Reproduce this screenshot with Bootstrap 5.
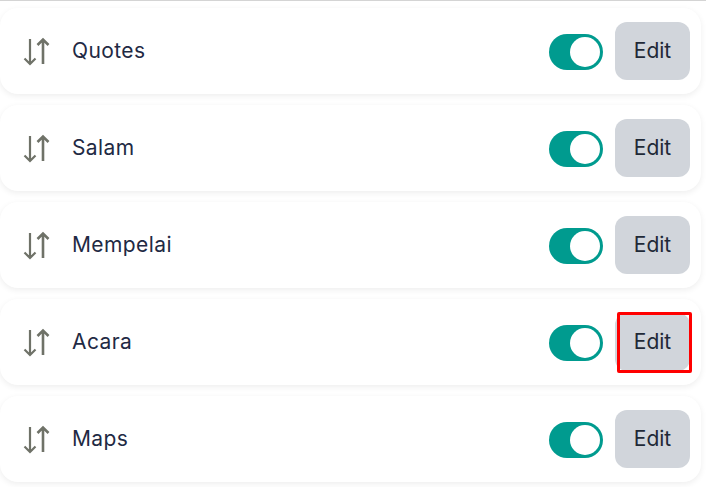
<!DOCTYPE html>
<html lang="id">
<head>
<meta charset="utf-8">
<title>Sections</title>
<link href="https://cdn.jsdelivr.net/npm/bootstrap@5.3.0/dist/css/bootstrap.min.css" rel="stylesheet">
<style>
html, body { height: 487px; overflow: hidden; }
body { background: #fff; font-family: Inter, sans-serif; border-top: 1px solid #d4d4d4; }
.sec-list { padding: 7px 5px 0 0; gap: 11px; }
.sec-row { height: 86px; background: #fff; border-radius: 18px; padding: 0 11px 0 22px; box-shadow: 0 2px 6px rgba(0,0,0,.07); }
.sec-drag { width: 28px; height: 30px; color: #6f7268; flex: none; }
.sec-name { margin: 0 0 1px 22px; font-size: 21px; letter-spacing: .4px; color: #1f2a44; line-height: 1; }
.sec-toggle { width: 54px; height: 36px; margin-top: 2px; border-radius: 18px; background: #009b8f; flex: none; padding: 3px; }
.sec-knob { width: 30px; height: 30px; border-radius: 50%; background: #fff; margin-left: auto; }
.sec-edit { width: 75px; height: 58px; margin-left: 12px; padding: 0; border: 0; border-radius: 12px; background: #d1d5db; color: #1f2937; font-size: 21px; }
.sec-edit:hover { background: #d1d5db; color: #1f2937; }
.sec-mark { border: 3px solid #f00; border-radius: 2px; position: absolute; top: -1px; right: -2px; bottom: -2px; left: 2px; pointer-events: none; }
</style>
</head>
<body>
<div class="d-flex flex-column sec-list">
  <div class="d-flex align-items-center sec-row">
    <svg class="sec-drag" viewBox="0 0 28 30" fill="none" stroke="currentColor" stroke-width="2.2"><path d="M8 3v25M2.5 22.5l5.500 5.500 5.500-5.500"/><path d="M21 28V3.500M15.500 9l5.500-5.500 5.500 5.500" stroke-width="2.600"/></svg>
    <span class="sec-name">Quotes</span>
    <div class="sec-toggle ms-auto"><div class="sec-knob"></div></div>
    <button type="button" class="btn sec-edit">Edit</button>
  </div>
  <div class="d-flex align-items-center sec-row">
    <svg class="sec-drag" viewBox="0 0 28 30" fill="none" stroke="currentColor" stroke-width="2.2"><path d="M8 3v25M2.5 22.5l5.500 5.500 5.500-5.500"/><path d="M21 28V3.500M15.500 9l5.500-5.500 5.500 5.500" stroke-width="2.600"/></svg>
    <span class="sec-name">Salam</span>
    <div class="sec-toggle ms-auto"><div class="sec-knob"></div></div>
    <button type="button" class="btn sec-edit">Edit</button>
  </div>
  <div class="d-flex align-items-center sec-row">
    <svg class="sec-drag" viewBox="0 0 28 30" fill="none" stroke="currentColor" stroke-width="2.2"><path d="M8 3v25M2.5 22.5l5.500 5.500 5.500-5.500"/><path d="M21 28V3.500M15.500 9l5.500-5.500 5.500 5.500" stroke-width="2.600"/></svg>
    <span class="sec-name">Mempelai</span>
    <div class="sec-toggle ms-auto"><div class="sec-knob"></div></div>
    <button type="button" class="btn sec-edit">Edit</button>
  </div>
  <div class="d-flex align-items-center sec-row">
    <svg class="sec-drag" viewBox="0 0 28 30" fill="none" stroke="currentColor" stroke-width="2.2"><path d="M8 3v25M2.5 22.5l5.500 5.500 5.500-5.500"/><path d="M21 28V3.500M15.500 9l5.500-5.500 5.500 5.500" stroke-width="2.600"/></svg>
    <span class="sec-name">Acara</span>
    <div class="sec-toggle ms-auto"><div class="sec-knob"></div></div>
    <button type="button" class="btn sec-edit position-relative">Edit<span class="sec-mark"></span></button>
  </div>
  <div class="d-flex align-items-center sec-row">
    <svg class="sec-drag" viewBox="0 0 28 30" fill="none" stroke="currentColor" stroke-width="2.2"><path d="M8 3v25M2.5 22.5l5.500 5.500 5.500-5.500"/><path d="M21 28V3.500M15.500 9l5.500-5.500 5.500 5.500" stroke-width="2.600"/></svg>
    <span class="sec-name">Maps</span>
    <div class="sec-toggle ms-auto"><div class="sec-knob"></div></div>
    <button type="button" class="btn sec-edit">Edit</button>
  </div>
</div>
<script src="https://cdn.jsdelivr.net/npm/bootstrap@5.3.0/dist/js/bootstrap.bundle.min.js"></script>
</body>
</html>
